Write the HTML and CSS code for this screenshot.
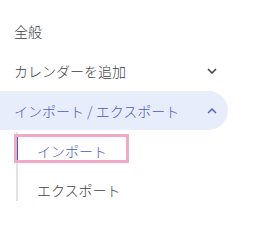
FILE: index.html
```html
<!DOCTYPE html>
<html lang="ja">
<head>
<meta charset="utf-8">
<link rel="stylesheet" href="styles.css">
</head>
<body>
<nav class="menu">
  <div class="row">全般</div>
  <div class="row">
    <span>カレンダーを追加</span>
    <svg class="chev" viewBox="0 0 24 24"><path d="M16.59 8.59L12 13.17 7.41 8.59 6 10l6 6 6-6z" fill="#3c4043"/></svg>
  </div>
  <div class="row open">
    <span>インポート / エクスポート</span>
    <svg class="chev" viewBox="0 0 24 24"><path d="M7.41 15.41L12 10.83l4.59 4.58L18 14l-6-6-6 6z" fill="#4a5bc4"/></svg>
  </div>
  <div class="sub">
    <div class="item active"><span class="mark"></span>インポート</div>
    <div class="item last">エクスポート</div>
  </div>
</nav>
</body>
</html>
```
FILE: styles.css
```css
html, body {
  margin: 0;
  padding: 0;
  background: #ffffff;
}
body {
  font-family: "Noto Sans CJK JP", "Noto Sans", sans-serif;
  font-size: 14px;
  font-weight: 300;
  color: #3c4043;
}
.menu {
  padding-top: 11px;
  width: 228px;
}
.row {
  height: 40px;
  display: flex;
  align-items: center;
  justify-content: space-between;
  padding: 0 7px 0 14px;
}
.row.open {
  background: #e8edfc;
  border-radius: 0 20px 20px 0;
  color: #4a5bc4;
  height: 39px;
}
.chev {
  width: 18px;
  height: 18px;
}
.sub {
  margin-left: 16px;
  margin-top: 2px;
  border-left: 2px solid #e3e3e3;
  width: 180px;
}
.item {
  position: relative;
  height: 38px;
  display: flex;
  align-items: center;
  padding-left: 19px;
  box-sizing: border-box;
}
.item.last {
  height: 31px;
  padding-top: 9px;
}
.item.active {
  color: #4a5bc4;
}
.item.active .mark {
  position: absolute;
  left: -2px;
  top: 5px;
  width: 2px;
  height: 23px;
  background: #4a5bc4;
}
.item.active::after {
  content: "";
  position: absolute;
  left: -4px;
  top: 2px;
  width: 109px;
  height: 23px;
  border: 3px solid #f2a9c6;
}
```
